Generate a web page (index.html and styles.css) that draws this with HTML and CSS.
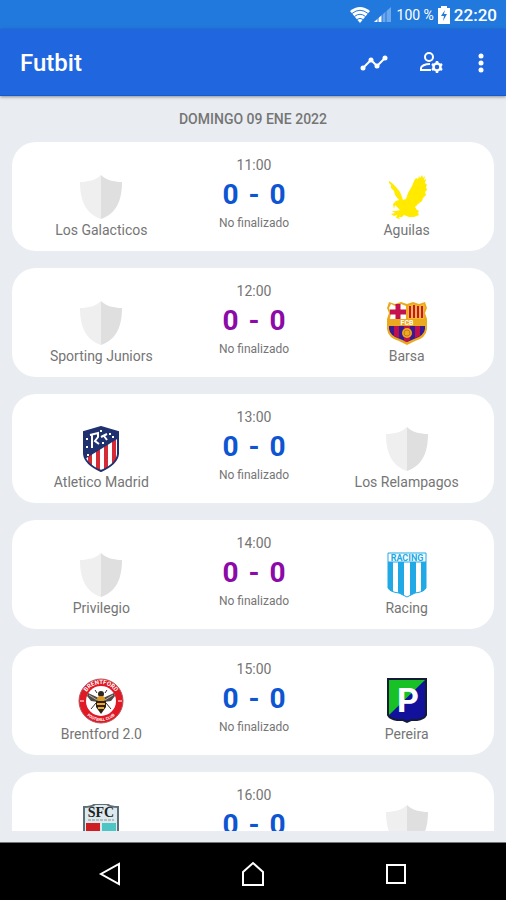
FILE: index.html
```html
<!DOCTYPE html>
<html lang="es">

<head>
    <meta charset="UTF-8">
    <meta name="viewport" content="width=device-width, initial-scale=1.0">
    <title>Futbit</title>
    <link rel="stylesheet" href="styles.css">
</head>

<body>
    <svg class="sprite" aria-hidden="true">
        <symbol id="shield" viewBox="0 0 42 44">
            <path d="M21 0C16 5 8 7 0 7C0 26 6 39 21 44Z" fill="#efefef" />
            <path d="M21 0C26 5 34 7 42 7C42 26 36 39 21 44Z" fill="#dfdfdf" />
        </symbol>
    </svg>

    <div class="status">
        <svg width="20" height="18" viewBox="0 0 20 18" fill="none" stroke="#fff">
            <path d="M0 5Q10-3 20 5L10 17Z" fill="#fff" stroke="none" />
            <path d="M2 7.500Q10 1 18 7.500M4.500 10.500Q10 6 15.500 10.500M7 13.500Q10 11 13 13.500" stroke="#2279dd" />
        </svg>
        <svg class="signal" width="17" height="15" viewBox="0 0 17 15">
            <path d="M0 15L17 0V15Z" fill="#6ba7eb" />
            <path d="M0 15L8 8V15Z" fill="#fff" />
            <path d="M4 0V15M8 0V15M12 0V15" stroke="#2279dd" />
        </svg>
        <span class="percent">100 %</span>
        <svg width="12" height="18" viewBox="0 0 12 18">
            <path d="M3 2V0H9V2H12V18H0V2Z" fill="#fff" />
            <path d="M7 4L3 10H6L5 15L9 8H6Z" fill="#2279dd" />
        </svg>
        <span class="clock">22:20</span>
    </div>

    <header class="bar">
        <h1>Futbit</h1>
        <button class="action" type="button" aria-label="Estadísticas">
            <svg width="28" height="28" viewBox="0 0 28 28" fill="none" stroke="#fff" stroke-width="2">
                <path d="M3 19L11 11L17 17L25 9" />
                <g fill="#fff" stroke="none">
                    <circle cx="3" cy="19" r="2.500" />
                    <circle cx="11" cy="11" r="2.500" />
                    <circle cx="17" cy="17" r="2.500" />
                    <circle cx="25" cy="9" r="2.500" />
                </g>
            </svg>
        </button>
        <button class="action" type="button" aria-label="Administrar usuario">
            <svg width="28" height="28" viewBox="0 0 28 28" fill="none" stroke="#fff" stroke-width="2">
                <circle cx="12" cy="8" r="4" />
                <path d="M13 15C8 15 4 17 4 19V21H14" />
                <circle cx="20" cy="18" r="3.500" stroke-width="2.500" />
                <path d="M20 12V14M20 22V24M15 15L17 16.500M23 19.500L25 21M25 15L23 16.500M17 19.500L15 21" stroke-width="2.500" />
            </svg>
        </button>
        <button class="action more" type="button" aria-label="Más opciones">
            <svg width="6" height="20" viewBox="0 0 6 20" fill="#fff">
                <circle cx="3" cy="3" r="2.500" />
                <circle cx="3" cy="10" r="2.500" />
                <circle cx="3" cy="17" r="2.500" />
            </svg>
        </button>
    </header>

    <main class="matches">
        <h2>DOMINGO 09 ENE 2022</h2>

        <article class="match">
            <div class="team">
                <svg class="crest"><use href="#shield" /></svg>
                <div>Los Galacticos</div>
            </div>
            <div class="result">
                <time>11:00</time>
                <div class="score"><b>0</b><b>-</b><b>0</b></div>
                <small>No finalizado</small>
            </div>
            <div class="team">
                <svg class="crest" viewBox="0 0 42 44" fill="#ffea00">
                    <path d="M3 6L6 8L10 12L14 17L16 22L17 25L20 24L22 18L26 11L28 6L30 3L32 4L33 1L34 3L36 0L37 3L39 1L38 5L40 4L39 8L41 10L40 12L41 15L39 17L40 20L37 23L36 26L32 29L29 32L31 35L33 36L32 38L33 40L28 42L23 42L18 40L16 42L13 42L14 44L10 43L11 40L8 41L5 39L9 38L6 36L10 36L14 35L11 32L9 30L8 34L7 29L10 26L13 25L9 20L8 16L5 13L5 10L3 8Z" />
                </svg>
                <div>Aguilas</div>
            </div>
        </article>

        <article class="match">
            <div class="team">
                <svg class="crest"><use href="#shield" /></svg>
                <div>Sporting Juniors</div>
            </div>
            <div class="result">
                <time>12:00</time>
                <div class="score purple"><b>0</b><b>-</b><b>0</b></div>
                <small>No finalizado</small>
            </div>
            <div class="team">
                <svg class="crest" viewBox="0 0 42 44">
                    <path d="M3 1L9 3L15 1L21 3L27 1L33 3L39 1L41 7L39 12L41 18V28Q40 37 29 40L21 44L13 40Q2 37 1 28V18L3 12L1 7Z" fill="#eba91f" />
                    <path d="M5 3L9 5L15 3L20 5V18H4L5 12L3 7Z" fill="#fff" />
                    <path d="M12 3V18M4 11H20" stroke="#c4124c" stroke-width="5" />
                    <path d="M22 5L27 3L33 5L38 3L39 7L37 12L38 18H22Z" fill="#f6bc26" />
                    <path d="M24 5V17M28 4V17M32 5V17M36 5V17" stroke="#c4124c" stroke-width="2" />
                    <path d="M3 25H39V28Q38 35 28 38L21 41L14 38Q4 35 3 28Z" fill="#3a1a91" />
                    <path d="M8 25H13V37L8 35ZM18 25H24V39L21 41L18 40ZM29 25H34V35L29 37Z" fill="#bd104d" />
                    <circle cx="21" cy="32" r="5" fill="#eba91f" />
                    <circle cx="21" cy="32" r="3" fill="none" stroke="#c87818" />
                    <text x="21" y="24" class="fcb">FCB</text>
                </svg>
                <div>Barsa</div>
            </div>
        </article>

        <article class="match">
            <div class="team">
                <svg class="crest" viewBox="0 0 42 44">
                    <defs>
                        <clipPath id="atm"><path d="M4 5L21 0L38 5V27Q37 37 21 44Q5 37 4 27Z" /></clipPath>
                    </defs>
                    <g clip-path="url(#atm)">
                        <path d="M0 0H42V46H0Z" fill="#fff" />
                        <path d="M10 18V44M18 14V46M26 10V46M34 8V44" stroke="#d52b35" stroke-width="4" />
                        <path d="M0 0H42V9L3 33Z" fill="#20316f" />
                    </g>
                    <path d="M4 5L21 0L38 5V27Q37 37 21 44Q5 37 4 27Z" fill="none" stroke="#20316f" stroke-width="2" />
                    <path d="M12 7V21M10 8L18 6V10L15 14L19 17M21 10L27 7M24 9L27 13" fill="none" stroke="#fff" stroke-width="2" />
                    <path d="M6 11h2v2h-2zM6 19h2v2h-2zM7 27h2v2h-2zM20 3h2v2h-2zM29 6h2v2h-2zM32 9h2v2h-2zM22 15h2v2h-2z" fill="#fff" />
                </svg>
                <div>Atletico Madrid</div>
            </div>
            <div class="result">
                <time>13:00</time>
                <div class="score"><b>0</b><b>-</b><b>0</b></div>
                <small>No finalizado</small>
            </div>
            <div class="team">
                <svg class="crest"><use href="#shield" /></svg>
                <div>Los Relampagos</div>
            </div>
        </article>

        <article class="match">
            <div class="team">
                <svg class="crest"><use href="#shield" /></svg>
                <div>Privilegio</div>
            </div>
            <div class="result">
                <time>14:00</time>
                <div class="score purple"><b>0</b><b>-</b><b>0</b></div>
                <small>No finalizado</small>
            </div>
            <div class="team">
                <svg class="crest" viewBox="0 0 42 44">
                    <defs>
                        <clipPath id="rac"><path d="M2 0H40V35Q38 39 29 40L21 44L13 40Q4 39 2 35Z" /></clipPath>
                    </defs>
                    <g clip-path="url(#rac)">
                        <path d="M0 0H42V46H0Z" fill="#fff" />
                        <path d="M4 9V44M15 9V46M27 9V46M38 9V44" stroke="#21a9e6" stroke-width="6" />
                        <path d="M2 9H40" stroke="#21a9e6" />
                    </g>
                    <path d="M2 0H40V35Q38 39 29 40L21 44L13 40Q4 39 2 35Z" fill="none" stroke="#21a9e6" />
                    <text x="21" y="8" class="racing">RACING</text>
                </svg>
                <div>Racing</div>
            </div>
        </article>

        <article class="match">
            <div class="team">
                <svg class="crest wide" viewBox="0 0 46 46">
                    <defs>
                        <path id="arc-top" d="M6 23A17 17 0 0 1 40 23" />
                        <path id="arc-bottom" d="M3 23A20 20 0 0 0 43 23" />
                    </defs>
                    <circle cx="23" cy="23" r="22" fill="#e01925" stroke="#b5535a" />
                    <circle cx="23" cy="23" r="15" fill="#fff" />
                    <text class="ring"><textPath href="#arc-top" startOffset="50%">BRENTFORD</textPath></text>
                    <text class="ring small"><textPath href="#arc-bottom" startOffset="50%">FOOTBALL CLUB</textPath></text>
                    <path d="M2 23H6M40 23H44" stroke="#fff" />
                    <path d="M21 20L10 15L9 18L13 23L20 24ZM25 20L36 15L37 18L33 23L26 24Z" fill="#514b47" />
                    <path d="M19 22L11 17M27 22L35 17" stroke="#bab5af" />
                    <path d="M18 25L13 31M28 25L33 31M19 15L17 12M27 15L29 12" stroke="#3a3025" />
                    <circle cx="23" cy="16" r="3" fill="#2e251c" />
                    <ellipse cx="23" cy="21" rx="4" ry="3" fill="#d89a25" />
                    <path d="M18 23H28V29L23 36L18 29Z" fill="#2b2115" />
                    <path d="M19 26H27M20 30H26" stroke="#f0aa24" stroke-width="2" />
                </svg>
                <div>Brentford 2.0</div>
            </div>
            <div class="result">
                <time>15:00</time>
                <div class="score"><b>0</b><b>-</b><b>0</b></div>
                <small>No finalizado</small>
            </div>
            <div class="team">
                <svg class="crest" viewBox="0 0 42 44">
                    <path d="M2 0H40V36Q38 40 31 41H25L21 43L17 41H11Q4 40 2 36Z" fill="#11119c" />
                    <path d="M2 0H40L2 37Z" fill="#17c126" />
                    <path d="M2 0H40V36Q38 40 31 41H25L21 43L17 41H11Q4 40 2 36Z" fill="none" stroke="#141b38" stroke-width="2" />
                    <text x="22" y="33" class="letter">P</text>
                </svg>
                <div>Pereira</div>
            </div>
        </article>

        <article class="match">
            <div class="team">
                <svg class="crest" viewBox="0 0 42 44">
                    <path d="M4 2Q12 2 15-1H27Q30 2 38 2V44H4Z" fill="#dce9ed" stroke="#5f6e76" stroke-width="2" />
                    <text x="21" y="12" class="sfc">SFC</text>
                    <path d="M8 15H34" stroke="#87949b" stroke-dasharray="3 1" />
                    <path d="M6 18H20V32H6Z" fill="#cf1d24" />
                    <path d="M22 18H36V32H22Z" fill="#4dc5c4" />
                </svg>
            </div>
            <div class="result">
                <time>16:00</time>
                <div class="score"><b>0</b><b>-</b><b>0</b></div>
            </div>
            <div class="team">
                <svg class="crest"><use href="#shield" /></svg>
            </div>
        </article>
    </main>

    <nav class="keys">
        <button type="button" aria-label="Atrás">
            <svg width="26" height="26" viewBox="0 0 26 26"><path d="M22 3V23L4 13Z" /></svg>
        </button>
        <button type="button" aria-label="Inicio">
            <svg width="26" height="26" viewBox="0 0 26 26"><path d="M3 11L13 2L23 11V24H3Z" /></svg>
        </button>
        <button type="button" aria-label="Recientes">
            <svg width="26" height="26" viewBox="0 0 26 26"><path d="M4 4H22V22H4Z" /></svg>
        </button>
    </nav>
</body>

</html>
```
FILE: styles.css
```css
* {
    box-sizing: border-box;
}

body {
    height: 100vh;
    margin: 0;
    display: flex;
    flex-direction: column;
    background-color: #e9edf1;
    color: #757575;
    font-family: Roboto, sans-serif;
    font-size: 14px;
    line-height: 16px;
}

button {
    display: flex;
    justify-content: center;
    align-items: center;
    padding: 0;
    border: 0;
    background: none;
}

.sprite {
    display: none;
}

/* status bar */
.status {
    flex: none;
    height: 29px;
    padding: 0 9px;
    display: flex;
    justify-content: flex-end;
    align-items: center;
    gap: 4px;
    background-color: #2279dd;
    color: #fff;
}

.signal {
    margin-right: 2px;
}

.clock {
    font-size: 17px;
    font-weight: 500;
}

/* app bar */
.bar {
    flex: none;
    height: 67px;
    padding: 2px 15px 0 20px;
    display: flex;
    align-items: center;
    background-color: #2067df;
    border-bottom: 1px solid #165bcb;
    box-shadow: 0 1px 3px rgba(0, 0, 0, 0.4);
    z-index: 1;
}

.bar h1 {
    flex: 1;
    margin: 0;
    color: #fff;
    font-size: 24px;
    font-weight: 500;
    line-height: 28px;
}

.action {
    width: 57px;
    height: 48px;
}

.more {
    width: 20px;
    margin-left: 12px;
}

/* match list */
.matches {
    flex: 1;
    min-height: 0;
    margin-bottom: 11px;
    padding: 0 12px;
    overflow: hidden;
}

.matches h2 {
    margin: 0;
    font-size: 14px;
    font-weight: 500;
    line-height: 46px;
    text-align: center;
}

.match {
    height: 109px;
    margin-bottom: 17px;
    padding: 0 11px 0 13px;
    display: grid;
    grid-template-columns: 1fr 1fr 1fr;
    background-color: #fff;
    border-radius: 24px;
    text-align: center;
}

.team {
    padding-top: 32px;
}

.crest {
    display: block;
    width: 42px;
    height: 46px;
    margin: 0 auto 2px;
}

.wide {
    width: 46px;
}

.result {
    padding-top: 15px;
}

.result time {
    display: block;
}

.score {
    display: flex;
    justify-content: center;
    gap: 10px;
    color: #0d55d3;
    font-size: 28px;
    line-height: 44px;
}

.purple {
    color: #8b0aa8;
}

.result small {
    display: block;
    font-size: 12px;
    line-height: 12px;
}

/* lettering on the crests */
.fcb,
.racing,
.sfc,
.letter,
.ring {
    text-anchor: middle;
    font-weight: 700;
}

.fcb {
    fill: #fff;
    font-size: 7px;
}

.racing {
    fill: #21a9e6;
    font-size: 9px;
}

.sfc {
    fill: #222;
    font-family: "Liberation Serif", serif;
    font-size: 14px;
}

.letter {
    fill: #fff;
    font-size: 34px;
}

.ring {
    fill: #fff;
    font-size: 6px;
}

.small {
    font-size: 4px;
}

/* navigation keys */
.keys {
    flex: none;
    height: 58px;
    padding: 4px 38px 0;
    display: grid;
    grid-template-columns: 1fr 1fr 1fr;
    background-color: #000;
    border-top: 1px solid #777;
}

.keys svg {
    fill: none;
    stroke: #fff;
    stroke-width: 2;
}
```
